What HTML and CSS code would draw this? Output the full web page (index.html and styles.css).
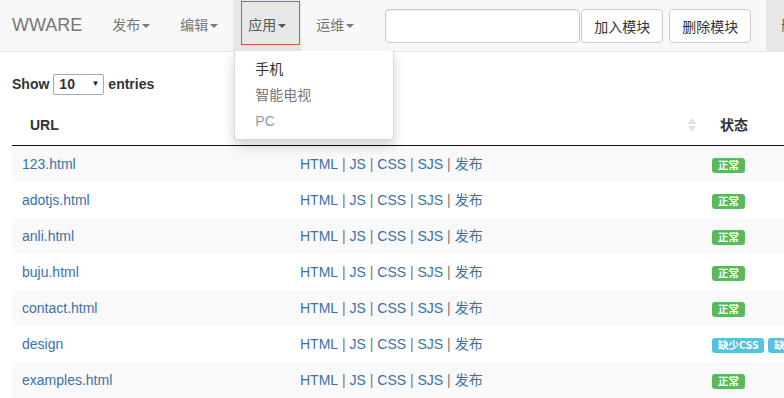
FILE: index.html
```html
<!DOCTYPE html>
<html lang="en">
  <head>
    <meta charset="UTF-8" />
    <meta name="viewport" content="width=device-width, initial-scale=1.0" />
    <title>WWARE</title>
    <link rel="stylesheet" href="styles.css">
  </head>
  <body>
    <nav class="navbar">
      <a class="brand" href="#">WWARE</a>
      <ul class="nav">
        <li><a href="#">发布<span class="caret"></span></a></li>
        <li><a href="#">编辑<span class="caret"></span></a></li>
        <li class="open">
          <a href="#"><span class="focus-ring"></span>应用<span class="caret"></span></a>
          <ul class="dropdown-menu">
            <li><a href="#">手机</a></li>
            <li class="muted"><a href="#">智能电视</a></li>
            <li class="faint"><a href="#">PC</a></li>
          </ul>
        </li>
        <li><a href="#">运维<span class="caret"></span></a></li>
      </ul>
      <form class="navbar-form">
        <input type="text" class="form-control" />
        <button type="button" class="btn btn-add">加入模块</button>
        <button type="button" class="btn">删除模块</button>
      </form>
      <ul class="nav nav-right">
        <li class="active"><a href="#">删除</a></li>
      </ul>
    </nav>

    <div class="content">
      <div class="table-length">
        <label>Show
          <span class="select">10<span class="select-arrow">&#9660;</span></span>
          entries</label>
      </div>
      <table class="data-table">
        <thead>
          <tr>
            <th class="col-url">URL</th>
            <th class="col-ops sorting"></th>
            <th class="col-state">状态</th>
          </tr>
        </thead>
        <tbody id="rows"></tbody>
      </table>
    </div>

    <script>
      const files = [
        { name: "123.html", state: ["ok"] },
        { name: "adotjs.html", state: ["ok"] },
        { name: "anli.html", state: ["ok"] },
        { name: "buju.html", state: ["ok"] },
        { name: "contact.html", state: ["ok"] },
        { name: "design", state: ["nocss", "nojs"] },
        { name: "examples.html", state: ["ok"] },
      ];
      const labels = {
        ok: '<span class="label label-success">正常</span>',
        nocss: '<span class="label label-info">缺少CSS</span>',
        nojs: '<span class="label label-info">缺少JS</span>',
      };
      const ops = ["HTML", "JS", "CSS", "SJS", "发布"]
        .map((op) => `<a href="#">${op}</a>`)
        .join(' <span class="sep">|</span> ');

      document.getElementById("rows").innerHTML = files
        .map(
          (f) => `<tr>
            <td><a href="#">${f.name}</a></td>
            <td>${ops}</td>
            <td class="labels">${f.state.map((s) => labels[s]).join(" ")}</td>
          </tr>`
        )
        .join("");
    </script>
  </body>
</html>
```

FILE: styles.css
```css
* {
  box-sizing: border-box;
}
body {
  margin: 0;
  width: 784px;
  height: 398px;
  overflow: hidden;
  font-family: "Liberation Sans", Arial, "Noto Sans CJK SC", sans-serif;
  font-size: 14px;
  line-height: 20px;
  color: #333;
  background: #fff;
}
a {
  text-decoration: none;
}
ul {
  list-style: none;
  margin: 0;
  padding: 0;
}

/* navbar */
.navbar {
  display: flex;
  height: 52px;
  background-color: #f8f8f8;
  border-bottom: 1px solid #e7e7e7;
  white-space: nowrap;
}
.brand {
  padding: 15px 15px 15px 12px;
  font-size: 18px;
  line-height: 20px;
  color: #777;
}
.nav {
  display: flex;
}
.nav > li {
  position: relative;
}
.nav > li > a {
  display: block;
  position: relative;
  padding: 15px;
  height: 51px;
  color: #777;
}
.nav > li.open > a,
.nav > li.active > a {
  background-color: #e7e7e7;
  color: #555;
}
.focus-ring {
  position: absolute;
  left: 8px;
  top: 1px;
  width: 59px;
  height: 44px;
  border: 1px solid #d9534f;
}
.caret {
  display: inline-block;
  width: 0;
  height: 0;
  margin-left: 2px;
  vertical-align: middle;
  border-top: 4px solid;
  border-left: 4px solid transparent;
  border-right: 4px solid transparent;
}
.nav-right {
  margin-left: auto;
}

.dropdown-menu {
  position: absolute;
  top: 51px;
  left: 1px;
  z-index: 10;
  min-width: 160px;
  padding: 5px 0;
  background: #fff;
  border: 1px solid rgba(0, 0, 0, 0.15);
  border-top: 0;
  border-radius: 0 0 4px 4px;
  box-shadow: 0 6px 12px rgba(0, 0, 0, 0.175);
}
.dropdown-menu a {
  display: block;
  padding: 3px 20px;
  line-height: 20px;
  color: #333;
}
.dropdown-menu .muted a {
  color: #777;
}
.dropdown-menu .faint a {
  color: #999;
}

.navbar-form {
  display: flex;
  align-items: flex-start;
  padding: 9px 15px 0 16px;
}
.form-control {
  width: 195px;
  height: 34px;
  padding: 6px 12px;
  border: 1px solid #ccc;
  border-radius: 4px;
  background: #fff;
  box-shadow: inset 0 1px 1px rgba(0, 0, 0, 0.075);
}
.btn {
  height: 34px;
  padding: 6px 12px;
  font-family: "Noto Sans CJK SC", sans-serif;
  font-size: 14px;
  line-height: 20px;
  color: #333;
  background: #fff;
  border: 1px solid #ccc;
  border-radius: 4px;
}
.btn-add {
  margin: 0 6px 0 1px;
}

/* table */
.content {
  padding: 20px 0 0 12px;
}
.table-length label {
  font-weight: bold;
  display: flex;
  align-items: center;
  gap: 4px;
  height: 24px;
}
.select {
  display: inline-flex;
  justify-content: space-between;
  align-items: center;
  width: 51px;
  height: 21px;
  padding: 0 4px 0 5px;
  border: 1px solid #a9a9a9;
  border-radius: 2px;
  font-weight: bold;
  font-size: 14px;
  background: #fff;
}
.select-arrow {
  font-size: 8px;
  color: #222;
}

.data-table {
  width: 840px;
  margin-top: 9px;
  border-collapse: collapse;
  table-layout: fixed;
}
.data-table th {
  padding: 10px 18px;
  text-align: left;
  font-weight: bold;
  border-bottom: 1px solid #111;
  font-family: "Liberation Sans", "Noto Sans CJK SC", sans-serif;
}
.col-url {
  width: 278px;
}
.col-ops {
  width: 412px;
}
.data-table th.sorting {
  position: relative;
}
.sorting::before,
.sorting::after {
  content: "";
  position: absolute;
  right: 6px;
  border-left: 4px solid transparent;
  border-right: 4px solid transparent;
}
.sorting::before {
  top: 13px;
  border-bottom: 6px solid #e0e0e0;
}
.sorting::after {
  top: 21px;
  border-top: 6px solid #e0e0e0;
}
.data-table td {
  height: 36px;
  padding: 8px 10px;
  white-space: nowrap;
  overflow: hidden;
}
.data-table tbody tr:nth-child(odd) {
  background-color: #f9f9f9;
}
.data-table td a {
  color: #3b72a6;
  font-family: "Liberation Sans", "Noto Sans CJK SC", sans-serif;
}
.sep {
  color: #777;
}

.label {
  display: inline-block;
  padding: 2px 6px 3px;
  font-size: 10.5px;
  font-weight: bold;
  line-height: 1;
  color: #fff;
  border-radius: 3px;
  font-family: "Noto Sans CJK SC", sans-serif;
  vertical-align: middle;
}
.label-success {
  background-color: #5cb85c;
}
.label-info {
  background-color: #5bc0de;
}
```
